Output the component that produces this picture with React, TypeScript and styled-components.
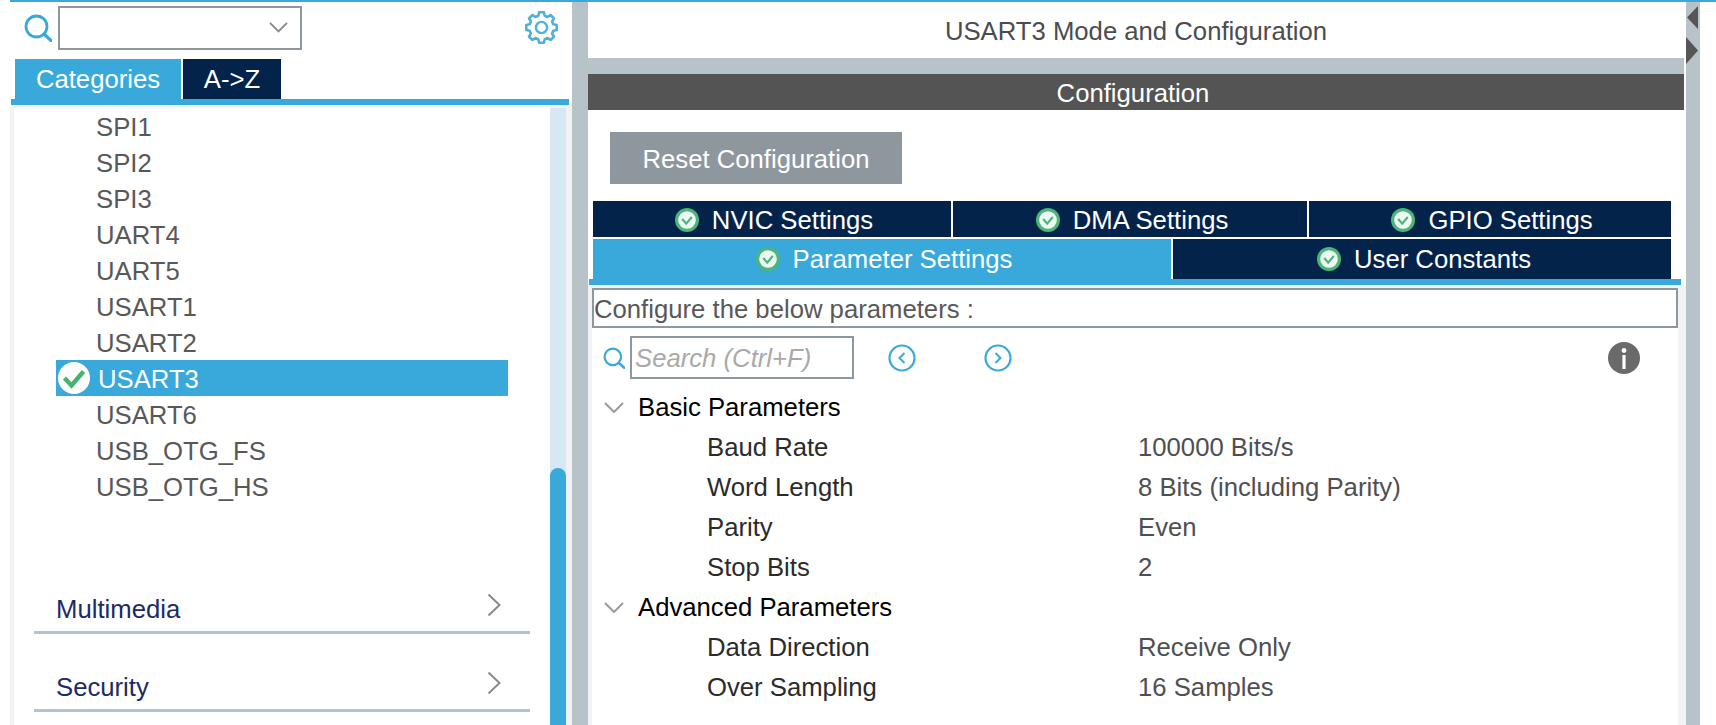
import styled, { createGlobalStyle } from 'styled-components';

const BLUE = '#39a9dc';
const NAVY = '#03234b';
const SLATE = '#b7c2c9';
const GUTTER = '#f1f2f4';

const GlobalStyle = createGlobalStyle`
  html, body {
    margin: 0;
    background: #fff;
    overflow: hidden;
  }
  body {
    font-family: "Liberation Sans", Arial, sans-serif;
    font-size: 25.7px;
  }
  * {
    box-sizing: border-box;
  }
`;

//Style Components
const Shell = styled.div`
  display: flex;
  width: 1706px;
  height: 725px;
  margin-left: 10px;
  border-top: 2px solid ${BLUE};
  overflow: hidden;
`;
const LeftPanel = styled.aside`
  display: flex;
  flex-direction: column;
  width: 562px;
  flex: none;
`;
const SearchBar = styled.div`
  display: flex;
  align-items: center;
  height: 57px;
  padding: 0 14px 6px 14px;
`;
const Combo = styled.div`
  display: flex;
  align-items: center;
  justify-content: flex-end;
  width: 244px;
  height: 44px;
  margin-left: 6px;
  padding-right: 12px;
  border: 2px solid #8f979e;
`;
const GearIcon = styled.svg`
  width: 33px;
  height: 33px;
  margin-left: auto;
  margin-right: 0;
`;
const CategoryTabs = styled.div`
  display: flex;
  gap: 2px;
  height: 40px;
  padding-left: 5px;
`;
const CategoryTab = styled.div<{ $active?: boolean }>`
  display: flex;
  align-items: center;
  justify-content: center;
  width: ${(props) => (props.$active ? '166px' : '98px')};
  background: ${(props) => (props.$active ? BLUE : NAVY)};
  color: #fff;
`;
const LeftRule = styled.div`
  height: 6px;
  margin: 0 3px 0 1px;
  background: ${BLUE};
`;
const LeftBody = styled.div`
  flex: 1;
  display: flex;
  min-height: 0;
  padding: 3px 6px 0 4px;
  background: ${GUTTER};
`;
const ListArea = styled.div`
  flex: 1;
  background: #fff;
`;
const Scrollbar = styled.div`
  display: flex;
  flex-direction: column;
  justify-content: flex-end;
  width: 16px;
  background: #d8e7f4;
`;
const ScrollThumb = styled.div`
  height: 257px;
  background: ${BLUE};
  border-radius: 8px 8px 0 0;
`;
const PeripheralRow = styled.div<{ $selected?: boolean }>`
  display: flex;
  align-items: center;
  gap: 8px;
  width: 452px;
  height: 36px;
  margin-left: 42px;
  padding-left: ${(props) => (props.$selected ? '2px' : '40px')};
  background: ${(props) => (props.$selected ? BLUE : 'transparent')};
  color: ${(props) => (props.$selected ? '#fff' : '#58585a')};
`;
const RowLabel = styled.span`
  padding-top: 2px;
`;
const Sections = styled.div`
  margin-top: 83px;
`;
const Section = styled.div`
  display: flex;
  align-items: center;
  justify-content: space-between;
  width: 496px;
  height: 47px;
  margin: 31px 0 0 20px;
  padding: 0 29px 0 22px;
  border-bottom: 3px solid #b7c3cc;
  color: #1c2a66;
`;
const SectionChevron = styled.svg`
  width: 14px;
  height: 24px;
  margin-top: -9px;
`;
const Divider = styled.div<{ $width: number }>`
  position: relative;
  flex: none;
  width: ${(props) => props.$width}px;
  background: ${SLATE};
`;
const CollapseArrows = styled.svg`
  position: absolute;
  top: 2px;
  left: 0;
  width: 14px;
  height: 62px;
`;
const RightPanel = styled.main`
  display: flex;
  flex-direction: column;
  width: 1098px;
  flex: none;
`;
const TitleBar = styled.div`
  display: flex;
  align-items: center;
  justify-content: center;
  height: 56px;
  margin-right: 2px;
  padding-top: 2px;
  color: #4c4c50;
`;
const Band = styled.div`
  height: 16px;
  margin-right: 2px;
  background: ${SLATE};
`;
const ConfigHeader = styled.div`
  display: flex;
  align-items: center;
  justify-content: center;
  height: 36px;
  margin-right: 2px;
  padding: 2px 6px 0 0;
  background: #535453;
  color: #fff;
`;
const ResetButton = styled.button`
  display: block;
  width: 292px;
  height: 52px;
  margin: 22px 0 17px 22px;
  padding: 2px 0 0;
  border: 0;
  background: #8f979e;
  color: #fff;
  font: inherit;
`;
const TabGrid = styled.div<{ $columns: string; $height: number }>`
  display: grid;
  grid-template-columns: ${(props) => props.$columns};
  gap: 2px;
  height: ${(props) => props.$height}px;
  margin: 0 0 2px 5px;
`;
const SettingTab = styled.div<{ $active?: boolean; $lift?: boolean }>`
  display: flex;
  align-items: center;
  justify-content: center;
  gap: 13px;
  padding: ${(props) => (props.$lift ? '0 0 0 4px' : '2px 0 0 4px')};
  background: ${(props) => (props.$active ? BLUE : NAVY)};
  color: #fff;
`;
const RightRule = styled.div`
  height: 6px;
  margin: -2px 5px 0 1px;
  background: ${BLUE};
`;
const ParamsArea = styled.div`
  flex: 1;
  padding: 3px 8px 0 4px;
  background: ${GUTTER};
`;
const ParamsInner = styled.div`
  height: 100%;
  background: #fff;
`;
const ParamsCaption = styled.div`
  display: flex;
  align-items: center;
  height: 40px;
  padding-top: 2px;
  border: 2px solid #8f979e;
  color: #58585a;
`;
const ParamsTools = styled.div`
  display: flex;
  align-items: center;
  height: 59px;
  padding: 0 38px 0 11px;
`;
const SearchBox = styled.div`
  display: flex;
  align-items: center;
  width: 224px;
  height: 43px;
  margin-left: 5px;
  padding: 2px 0 0 3px;
  border: 2px solid #8f979e;
  color: #a9a9a9;
  font-style: italic;
`;
const NavButton = styled.svg<{ $gap: number }>`
  width: 28px;
  height: 28px;
  margin-left: ${(props) => props.$gap}px;
`;
const InfoIcon = styled.svg`
  width: 32px;
  height: 32px;
  margin-left: auto;
`;
const GroupRow = styled.div`
  display: flex;
  align-items: center;
  gap: 14px;
  height: 40px;
  padding-left: 12px;
  color: #000;
`;
const ParamRow = styled.div`
  display: grid;
  grid-template-columns: 431px 1fr;
  align-items: center;
  height: 40px;
  padding-left: 115px;
  color: #2b2b2b;
`;
const ParamValue = styled.span`
  color: #4f4f52;
`;

function SearchGlass({ size }: { size: number }) {
  return (
    <svg width={size} height={size} viewBox="0 0 28 28" fill="none" stroke={BLUE}>
      <circle cx="12.5" cy="12.5" r="10.5" strokeWidth="2.8" />
      <path d="M20 20l7 6.5" strokeWidth="3.2" strokeLinecap="round" />
    </svg>
  );
}

function DownChevron({ width, color }: { width: number; color: string }) {
  return (
    <svg width={width} height={width * 0.55} viewBox="0 0 20 11" fill="none" stroke={color}>
      <path d="M1 1l9 9 9-9" strokeWidth="2" />
    </svg>
  );
}

function TabCheck() {
  return (
    <svg width="24" height="24" viewBox="0 0 24 24" fill="none">
      <circle cx="12" cy="12" r="12" fill="#4cb67a" />
      <circle cx="12" cy="12" r="8.8" fill="#eef8f2" />
      <path d="M7.2 11l4 4.6 5.6-6.6" stroke="#4cb67a" strokeWidth="2.2" />
    </svg>
  );
}

function RowCheck() {
  return (
    <svg width="32" height="32" viewBox="0 0 32 32" fill="none">
      <circle cx="16" cy="16" r="16" fill="#fff" />
      <path d="M6.5 16l7 7.5L25.5 9.5" stroke="#47b26f" strokeWidth="4.4" />
    </svg>
  );
}

// eight tooth outline, worked out from the angles of the teeth
function gearPath() {
  const point = (deg: number, r: number) => {
    const a = (deg * Math.PI) / 180;
    return `${(16.5 + r * Math.cos(a)).toFixed(2)} ${(16.5 + r * Math.sin(a)).toFixed(2)}`;
  };
  let d = '';
  for (let i = 0; i < 8; i++) {
    const c = i * 45;
    d += `${i === 0 ? 'M' : 'L'}${point(c - 15, 12.2)}L${point(c - 9, 15.4)}L${point(c + 9, 15.4)}L${point(c + 15, 12.2)}`;
  }
  return `${d}Z`;
}

const peripherals = ['SPI1', 'SPI2', 'SPI3', 'UART4', 'UART5', 'USART1', 'USART2', 'USART3', 'USART6', 'USB_OTG_FS', 'USB_OTG_HS'];

const parameterGroups = [
  {
    title: 'Basic Parameters',
    rows: [
      ['Baud Rate', '100000 Bits/s'],
      ['Word Length', '8 Bits (including Parity)'],
      ['Parity', 'Even'],
      ['Stop Bits', '2'],
    ],
  },
  {
    title: 'Advanced Parameters',
    rows: [
      ['Data Direction', 'Receive Only'],
      ['Over Sampling', '16 Samples'],
    ],
  },
];

function App() {
  return (
    <>
      <GlobalStyle />
      <Shell>
        <LeftPanel>
          <SearchBar>
            <SearchGlass size={28} />
            <Combo>
              <DownChevron width={19} color="#8a8a8a" />
            </Combo>
            <GearIcon viewBox="0 0 33 33" fill="none" stroke={BLUE} strokeOpacity="0.9">
              <path d={gearPath()} strokeWidth="2.6" strokeLinejoin="round" />
              <circle cx="16.5" cy="16.5" r="5.6" strokeWidth="2.4" />
            </GearIcon>
          </SearchBar>
          <CategoryTabs>
            <CategoryTab $active>Categories</CategoryTab>
            <CategoryTab>A-&gt;Z</CategoryTab>
          </CategoryTabs>
          <LeftRule />
          <LeftBody>
            <ListArea>
              {peripherals.map((name) => (
                <PeripheralRow key={name} $selected={name === 'USART3'}>
                  {name === 'USART3' && <RowCheck />}
                  <RowLabel>{name}</RowLabel>
                </PeripheralRow>
              ))}
              <Sections>
                {['Multimedia', 'Security'].map((name) => (
                  <Section key={name}>
                    {name}
                    <SectionChevron viewBox="0 0 14 24" fill="none" stroke="#8a8a8a">
                      <path d="M1.5 1.5l11 10.5-11 10.5" strokeWidth="2" />
                    </SectionChevron>
                  </Section>
                ))}
              </Sections>
            </ListArea>
            <Scrollbar>
              <ScrollThumb />
            </Scrollbar>
          </LeftBody>
        </LeftPanel>
        <Divider $width={16} />
        <RightPanel>
          <TitleBar>USART3 Mode and Configuration</TitleBar>
          <Band />
          <ConfigHeader>Configuration</ConfigHeader>
          <ResetButton>Reset Configuration</ResetButton>
          <TabGrid $columns="358px 354px 362px" $height={36}>
            <SettingTab>
              <TabCheck />
              NVIC Settings
            </SettingTab>
            <SettingTab>
              <TabCheck />
              DMA Settings
            </SettingTab>
            <SettingTab>
              <TabCheck />
              GPIO Settings
            </SettingTab>
          </TabGrid>
          <TabGrid $columns="578px 498px" $height={40}>
            <SettingTab $active $lift>
              <TabCheck />
              Parameter Settings
            </SettingTab>
            <SettingTab $lift>
              <TabCheck />
              User Constants
            </SettingTab>
          </TabGrid>
          <RightRule />
          <ParamsArea>
            <ParamsInner>
              <ParamsCaption>Configure the below parameters :</ParamsCaption>
              <ParamsTools>
                <SearchGlass size={22} />
                <SearchBox>Search (Ctrl+F)</SearchBox>
                <NavButton $gap={34} viewBox="0 0 28 28" fill="none" stroke={BLUE}>
                  <circle cx="14" cy="14" r="12.5" strokeWidth="2.2" />
                  <path d="M16.5 9l-5 5 5 5" strokeWidth="2" />
                </NavButton>
                <NavButton $gap={68} viewBox="0 0 28 28" fill="none" stroke={BLUE}>
                  <circle cx="14" cy="14" r="12.5" strokeWidth="2.2" />
                  <path d="M11.5 9l5 5-5 5" strokeWidth="2" />
                </NavButton>
                <InfoIcon viewBox="0 0 32 32">
                  <circle cx="16" cy="16" r="16" fill="#6a6a6a" />
                  <circle cx="16" cy="8.5" r="2.4" fill="#fff" />
                  <rect x="14.4" y="13" width="3.2" height="14" fill="#fff" />
                </InfoIcon>
              </ParamsTools>
              {parameterGroups.map((group) => (
                <div key={group.title}>
                  <GroupRow>
                    <DownChevron width={20} color="#9a9a9a" />
                    {group.title}
                  </GroupRow>
                  {group.rows.map(([label, value]) => (
                    <ParamRow key={label}>
                      <span>{label}</span>
                      <ParamValue>{value}</ParamValue>
                    </ParamRow>
                  ))}
                </div>
              ))}
            </ParamsInner>
          </ParamsArea>
        </RightPanel>
        <Divider $width={14}>
          <CollapseArrows viewBox="0 0 14 62" fill="#555">
            <path d="M12 2v23L1 13.5z" />
            <path d="M0 33l12 13.5L0 60z" />
          </CollapseArrows>
        </Divider>
      </Shell>
    </>
  );
}

export default App;
